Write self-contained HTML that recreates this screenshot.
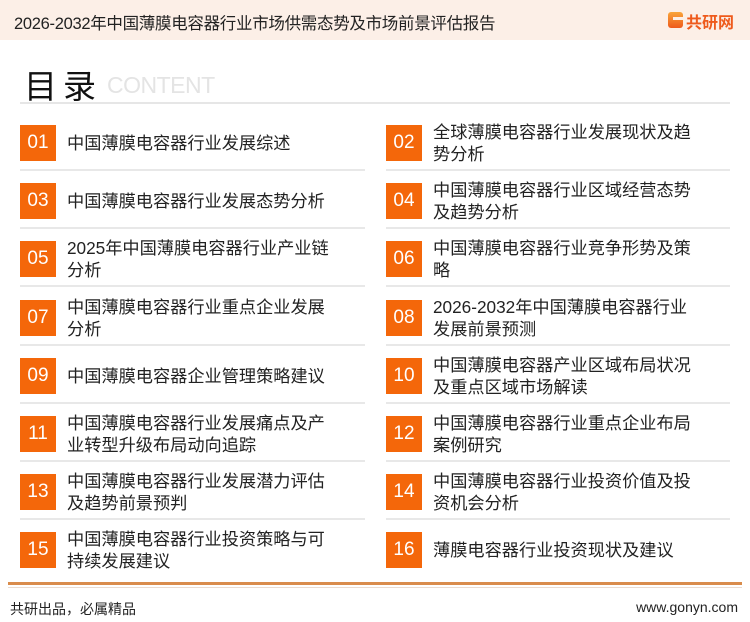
<!DOCTYPE html>
<html><head><meta charset="utf-8"><style>
*{margin:0;padding:0;box-sizing:border-box}
body{width:750px;height:622px;background:#fff;font-family:"Liberation Sans","Noto Sans CJK SC",sans-serif;position:relative;overflow:hidden;color:#222}
.hdr{position:absolute;left:0;top:0;width:750px;height:40px;background:#fcefe7}
.hdr .t{position:absolute;left:14px;top:10px;font-size:16.5px;color:#222;letter-spacing:-0.3px}
.logo{position:absolute;left:668px;top:11px;height:18px}
.logo .g{position:absolute;left:0;top:1px;width:15px;height:16px;background:linear-gradient(#f9a53a,#ee5a1c);border-radius:3px}
.logo .g:after{content:"";position:absolute;left:5px;top:5px;width:10px;height:3px;background:#fcefe7}
.logo span{position:absolute;left:18px;top:-2px;font-size:16px;font-weight:bold;color:#ee5a1c;white-space:nowrap}
.title{position:absolute;left:24px;top:60px;font-size:33px;color:#111;letter-spacing:6px}
.cont{position:absolute;left:107px;top:72px;font-size:23px;color:#e4e4e4;letter-spacing:-0.5px}
.ul{position:absolute;left:20px;top:102px;width:710px;height:2px;background:#e6e6e6}
.row{position:absolute;height:58px}
.box{position:absolute;left:0;top:13px;width:36px;height:36px;background:#f4670a;color:#fff;font-size:19px;text-align:center;line-height:36px}
.txt{position:absolute;left:47px;font-size:17.2px;line-height:22px;color:#222;width:262px}
.sep{position:absolute;left:0;top:57px;height:2px;background:#e8e8e8}
.fl1{position:absolute;left:8px;top:582px;width:734px;height:3px;background:#d98c4c}
.fl2{position:absolute;left:8px;top:587px;width:734px;height:1px;background:#eadbd0}
.ft{position:absolute;left:10px;top:599px;font-size:14px;color:#222}
.fr{position:absolute;right:12px;top:599px;font-size:14px;color:#222}
</style></head><body>
<div class="hdr"><div class="t">2026-2032年中国薄膜电容器行业市场供需态势及市场前景评估报告</div>
<div class="logo"><div class="g"></div><span>共研网</span></div></div>
<div class="title">目录</div><div class="cont">CONTENT</div>
<div class="ul"></div>

<div class="row" style="left:20px;top:112px"><div class="box">01</div><div class="txt" style="top:20px">中国薄膜电容器行业发展综述</div><div class="sep" style="width:345px"></div></div>
<div class="row" style="left:386px;top:112px"><div class="box">02</div><div class="txt" style="top:9px">全球薄膜电容器行业发展现状及趋势分析</div><div class="sep" style="width:344px"></div></div>

<div class="row" style="left:20px;top:170px"><div class="box">03</div><div class="txt" style="top:20px">中国薄膜电容器行业发展态势分析</div><div class="sep" style="width:345px"></div></div>
<div class="row" style="left:386px;top:170px"><div class="box">04</div><div class="txt" style="top:9px">中国薄膜电容器行业区域经营态势及趋势分析</div><div class="sep" style="width:344px"></div></div>

<div class="row" style="left:20px;top:228px"><div class="box">05</div><div class="txt" style="top:9px">2025年中国薄膜电容器行业产业链<br>分析</div><div class="sep" style="width:345px"></div></div>
<div class="row" style="left:386px;top:228px"><div class="box">06</div><div class="txt" style="top:9px">中国薄膜电容器行业竞争形势及策略</div><div class="sep" style="width:344px"></div></div>

<div class="row" style="left:20px;top:287px"><div class="box">07</div><div class="txt" style="top:9px">中国薄膜电容器行业重点企业发展分析</div><div class="sep" style="width:345px"></div></div>
<div class="row" style="left:386px;top:287px"><div class="box">08</div><div class="txt" style="top:9px">2026-2032年中国薄膜电容器行业<br>发展前景预测</div><div class="sep" style="width:344px"></div></div>

<div class="row" style="left:20px;top:345px"><div class="box">09</div><div class="txt" style="top:20px">中国薄膜电容器企业管理策略建议</div><div class="sep" style="width:345px"></div></div>
<div class="row" style="left:386px;top:345px"><div class="box">10</div><div class="txt" style="top:9px">中国薄膜电容器产业区域布局状况及重点区域市场解读</div><div class="sep" style="width:344px"></div></div>

<div class="row" style="left:20px;top:403px"><div class="box">11</div><div class="txt" style="top:9px">中国薄膜电容器行业发展痛点及产业转型升级布局动向追踪</div><div class="sep" style="width:345px"></div></div>
<div class="row" style="left:386px;top:403px"><div class="box">12</div><div class="txt" style="top:9px">中国薄膜电容器行业重点企业布局案例研究</div><div class="sep" style="width:344px"></div></div>

<div class="row" style="left:20px;top:461px"><div class="box">13</div><div class="txt" style="top:9px">中国薄膜电容器行业发展潜力评估及趋势前景预判</div><div class="sep" style="width:345px"></div></div>
<div class="row" style="left:386px;top:461px"><div class="box">14</div><div class="txt" style="top:9px">中国薄膜电容器行业投资价值及投资机会分析</div><div class="sep" style="width:344px"></div></div>

<div class="row" style="left:20px;top:519px"><div class="box">15</div><div class="txt" style="top:9px">中国薄膜电容器行业投资策略与可持续发展建议</div></div>
<div class="row" style="left:386px;top:519px"><div class="box">16</div><div class="txt" style="top:20px">薄膜电容器行业投资现状及建议</div></div>

<div class="fl1"></div><div class="fl2"></div>
<div class="ft">共研出品，必属精品</div>
<div class="fr">www.gonyn.com</div>
</body></html>
